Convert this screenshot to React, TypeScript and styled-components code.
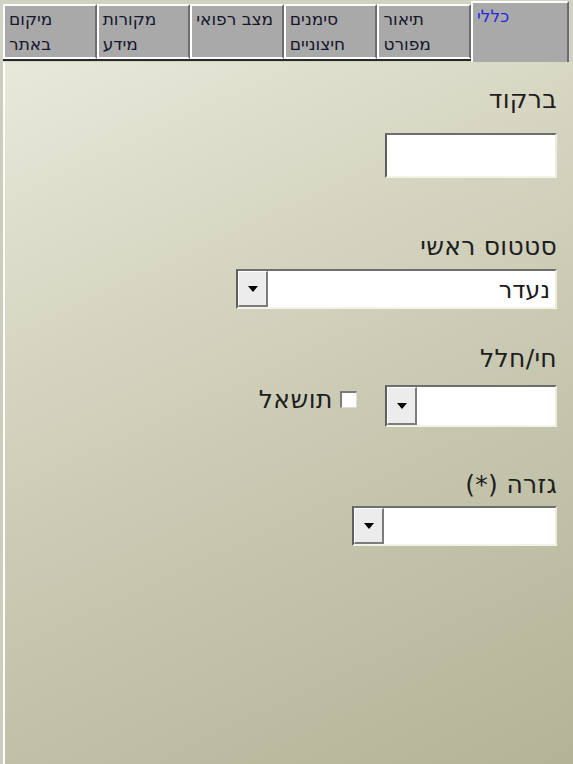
import React from 'react';
import styled, { createGlobalStyle, css } from 'styled-components';

const Global = createGlobalStyle`
  html, body { margin: 0; padding: 0; }
  body {
    width: 573px;
    height: 764px;
    overflow: hidden;
    background: #d4d4c4;
    font-family: "DejaVu Sans", "Liberation Sans", sans-serif;
  }
`;

const Screen = styled.div`
  width: 573px;
  height: 764px;
  display: flex;
  flex-direction: column;
  direction: rtl;
`;

const TabStrip = styled.div`
  display: flex;
  align-items: flex-start;
  height: 62px;
  flex-shrink: 0;
  padding: 0 4px 0 3px;
  background: #d2d2c2;
`;

const Tab = styled.div<{ $active?: boolean }>`
  box-sizing: border-box;
  text-align: left;
  background: #a9a9a9;
  border-top: 2px solid #ffffff;
  border-left: 2px solid #ffffff;
  border-right: 2px solid #6c6c6c;
  padding: 1px 4px 0 4px;
  font-size: 17px;
  line-height: 25px;
  color: ${p => (p.$active ? '#2828e4' : '#15152c')};
  white-space: pre-line;
  ${p =>
    p.$active
      ? css`
          width: 98px;
          height: 61px;
          margin-top: 1px;
        `
      : css`
          flex: 1;
          height: 55px;
          margin-top: 4px;
          border-bottom: 2px solid #ffffff;
          box-shadow: 0 2px 0 #2a2a2a;
        `}
`;

const Panel = styled.div`
  flex: 1;
  display: flex;
  flex-direction: column;
  align-items: flex-start;
  padding: 26px 16px 0 0;
  background: linear-gradient(155deg, #e9e9db 0%, #d3d3bf 35%, #c4c4ac 65%, #b3b397 100%);
  box-shadow: inset 3px 0 0 #cdcdbd, inset 5px 0 0 #ffffff;
`;

const Field = styled.div<{ $top: number }>`
  display: flex;
  flex-direction: column;
  align-items: flex-start;
  margin-top: ${p => p.$top}px;
`;

const Label = styled.div<{ $gap: number }>`
  font-size: 25px;
  line-height: 24px;
  letter-spacing: 0.3px;
  color: #1e1e1e;
  margin-bottom: ${p => p.$gap}px;
`;

const TextBox = styled.div<{ $w: number; $h: number }>`
  box-sizing: border-box;
  width: ${p => p.$w}px;
  height: ${p => p.$h}px;
  background: #ffffff;
  border-top: 2px solid #6e6e6e;
  border-right: 2px solid #ededdf;
  border-bottom: 2px solid #f3f3e8;
  border-left: 2px solid #5e5e5e;
`;

const Combo = styled(TextBox)`
  display: flex;
  align-items: stretch;
`;

const ComboValue = styled.div`
  flex: 1;
  display: flex;
  align-items: center;
  padding: 2px 5px 0 0;
  font-size: 24px;
  color: #1a1a1a;
`;

const ComboButton = styled.div`
  box-sizing: border-box;
  width: 30px;
  display: flex;
  align-items: center;
  justify-content: center;
  background: #ececec;
  border-top: 1px solid #ffffff;
  border-left: 1px solid #ffffff;
  border-right: 2px solid #7c7c7c;
  border-bottom: 2px solid #7c7c7c;
`;

const Row = styled.div`
  display: flex;
  align-items: flex-start;
`;

const CheckBox = styled.div`
  box-sizing: border-box;
  width: 17px;
  height: 17px;
  margin: 6px 28px 0 0;
  background: #ffffff;
  border-top: 2px solid #7a7a7a;
  border-left: 2px solid #7a7a7a;
  border-bottom: 1px solid #dcdcd0;
  border-right: 1px solid #dcdcd0;
`;

const CheckLabel = styled.div`
  margin: 0 7px 0 0;
  font-size: 25px;
  line-height: 24px;
  letter-spacing: 0.5px;
  padding-top: 3px;
  color: #1e1e1e;
`;

const Arrow = () => (
  <svg width="10" height="6" viewBox="0 0 10 6">
    <path d="M0 0 H10 L5 6 Z" fill="#000" />
  </svg>
);

const ComboField = ({ w, h, value }: { w: number; h: number; value?: string }) => (
  <Combo $w={w} $h={h}>
    <ComboValue>{value}</ComboValue>
    <ComboButton>
      <Arrow />
    </ComboButton>
  </Combo>
);

const tabs = [
  { label: 'כללי', active: true },
  { label: 'תיאור\nמפורט' },
  { label: 'סימנים\nחיצוניים' },
  { label: 'מצב רפואי' },
  { label: 'מקורות\nמידע' },
  { label: 'מיקום\nבאתר' },
];

export default function App() {
  return (
    <>
      <Global />
      <Screen>
        <TabStrip>
          {tabs.map(t => (
            <Tab key={t.label} $active={t.active}>
              {t.label}
            </Tab>
          ))}
        </TabStrip>
        <Panel>
          <Field $top={0}>
            <Label $gap={21}>ברקוד</Label>
            <TextBox $w={172} $h={45} />
          </Field>
          <Field $top={57}>
            <Label $gap={10}>סטטוס ראשי</Label>
            <ComboField w={321} h={40} value="נעדר" />
          </Field>
          <Field $top={38}>
            <Label $gap={14}>חי/חלל</Label>
            <Row>
              <ComboField w={172} h={42} />
              <CheckBox />
              <CheckLabel>תושאל</CheckLabel>
            </Row>
          </Field>
          <Field $top={46}>
            <Label $gap={9}>גזרה (*)</Label>
            <ComboField w={205} h={40} />
          </Field>
        </Panel>
      </Screen>
    </>
  );
}
